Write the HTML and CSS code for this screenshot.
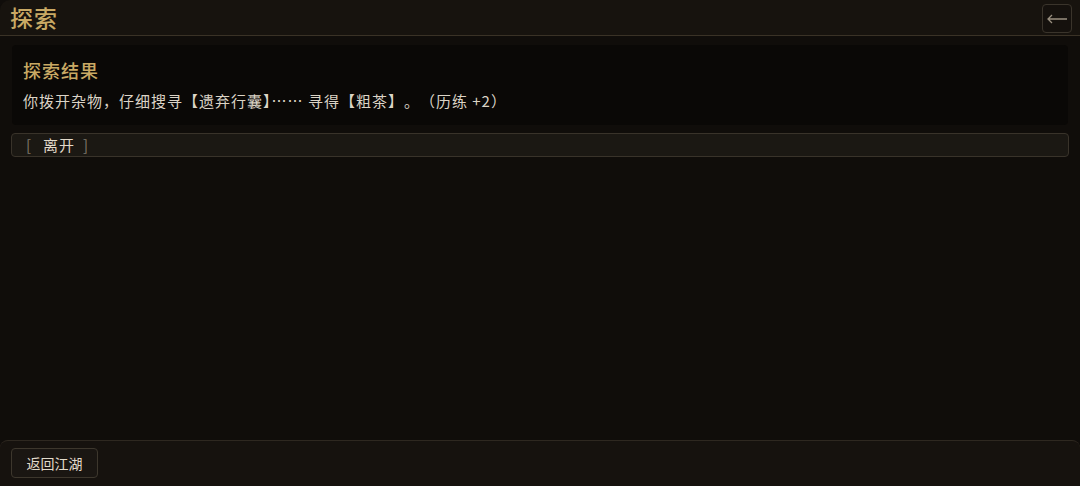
FILE: index.html
```html
<!DOCTYPE html>
<html lang="zh">
<head>
<meta charset="utf-8">
<link rel="stylesheet" href="styles.css">
</head>
<body>
<div class="app">
  <header class="topbar">
    <h1 class="title">探索</h1>
    <button class="back" aria-label="返回">
      <svg width="22" height="10" viewBox="0 0 22 10"><path d="M21 5H2M6 1L2 5l4 4" fill="none" stroke="#9a9080" stroke-width="1.3"/></svg>
    </button>
  </header>
  <main class="content">
    <section class="card">
      <h2 class="card-title">探索结果</h2>
      <p class="card-text">你拨开杂物，仔细搜寻【遗弃行囊<span class="half">】</span>…… 寻得【粗茶】。（历练 +2）</p>
    </section>
    <button class="option"><span class="br">[</span><span class="opt-label">离开</span><span class="br">]</span></button>
  </main>
  <footer class="footer">
    <button class="home">返回江湖</button>
  </footer>
</div>
</body>
</html>
```
FILE: styles.css
```css
* { box-sizing: border-box; }
html, body { margin: 0; padding: 0; height: 100%; }
body {
  background: #100d0a;
  font-family: "Noto Sans CJK SC", "Noto Sans", sans-serif;
  color: #d8d0c2;
  text-spacing-trim: space-all;
}
.app {
  height: 486px;
  display: flex;
  flex-direction: column;
}
.topbar {
  height: 36px;
  flex: none;
  display: flex;
  align-items: center;
  justify-content: space-between;
  padding: 0 8px 0 10px;
  background: #17130e;
  border-bottom: 1px solid #3a3226;
  border-top-left-radius: 10px;
}
.title {
  margin: 0;
  font-size: 23px;
  letter-spacing: 1px;
  font-weight: 500;
  color: #c9a964;
  line-height: 1;
}
.back {
  width: 30px;
  height: 29px;
  margin-top: 2px;
  border: 1px solid #3a342b;
  border-radius: 4px;
  background: #15110d;
  display: flex;
  align-items: center;
  justify-content: center;
  padding: 0;
}
.content {
  flex: 1;
  padding: 9px 11px 0 11px;
  display: flex;
  flex-direction: column;
  gap: 8px;
}
.card {
  margin: 0 1px;
  height: 80px;
  background: #0a0806;
  border-radius: 4px;
  padding: 13px 11px 0 11px;
}
.card-title {
  margin: 0;
  font-size: 18px;
  letter-spacing: 1px;
  font-weight: 500;
  color: #c9a964;
  line-height: 24px;
}
.card-text {
  margin: 9px 0 0;
  font-size: 15px;
  letter-spacing: 1px;
  line-height: 20px;
  color: #dcd4c6;
  text-spacing-trim: space-all;
}
.half { font-feature-settings: "halt" 1; }
.option {
  height: 24px;
  text-align: left;
  padding: 0 0 0 14px;
  font-family: inherit;
  font-size: 15px;
  color: #e2dacb;
  background: #1b1813;
  border: 1px solid #39332a;
  border-radius: 4px;
  line-height: 22px;
  display: flex;
  align-items: center;
}
.opt-label { margin: 0 8px 0 12px; letter-spacing: 1px; }
.br { color: #7f796c; }
.footer {
  height: 46px;
  flex: none;
  background: #16120e;
  border-top: 1px solid #2e2820;
  border-radius: 8px 8px 0 0;
  padding: 7px 11px;
}
.home {
  width: 87px;
  height: 30px;
  font-family: inherit;
  font-size: 14px;
  color: #e2dacb;
  background: #1a1612;
  border: 1px solid #3d372d;
  border-radius: 4px;
  padding: 0;
}
```
